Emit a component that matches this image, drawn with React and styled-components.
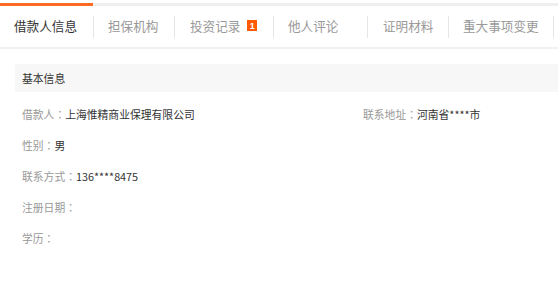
import { Fragment } from "react";
import styled, { createGlobalStyle } from "styled-components";

const GlobalStyle = createGlobalStyle`
    body {
        margin: 0;
        background: #fff;
        font-family: "Noto Sans CJK SC", "Noto Sans", sans-serif;
    }
`;

const Page = styled.div`
    width: 558px;
    padding-top: 3px;
`;

const TabBar = styled.div`
    display: flex;
    align-items: center;
    height: 41px;
    border-top: 3px solid #efefef;
    border-bottom: 2px solid #f2f2f2;
`;

const Tab = styled.div`
    display: flex;
    align-items: center;
    width: ${(p) => p.$w}px;
    height: 44px;
    margin-top: -3px;
    box-sizing: border-box;
    padding-left: ${(p) => p.$pad}px;
    padding-bottom: 2px;
    border-top: 3px solid ${(p) => (p.$active ? "#ff6a22" : "transparent")};
    font-size: 12.6px;
    color: ${(p) => (p.$active ? "#333" : "#999")};
    white-space: nowrap;
    cursor: pointer;
`;

const Divider = styled.span`
    flex: none;
    width: 1px;
    height: 22px;
    background: #e6e6e6;
    margin-top: 1px;
`;

const Badge = styled.span`
    display: inline-flex;
    align-items: center;
    justify-content: center;
    width: 10px;
    height: 11px;
    margin: 0 0 0 7px;
    background: #ff5a00;
    color: #fff;
    font-family: "Liberation Sans", sans-serif;
    font-size: 9px;
    font-weight: bold;
`;

const Section = styled.div`
    margin: 15px 0 0 15px;
`;

const SectionHeader = styled.div`
    height: 28px;
    line-height: 28px;
    padding-left: 7px;
    background: #f7f7f7;
    font-size: 10.8px;
    color: #333;
`;

const InfoGrid = styled.div`
    display: grid;
    grid-template-columns: 341px 1fr;
    margin-top: 7px;
    padding-left: 7px;
`;

const InfoRow = styled.div`
    height: 31px;
    line-height: 31px;
    font-size: 10.8px;
    color: #999;
    white-space: nowrap;
`;

const Colon = styled.span`
    font-family: "Noto Sans CJK TC", sans-serif;
`;

const Value = styled.span`
    color: #333;
`;

const tabs = [
    { t: "借款人信息", w: 93, pad: 14 },
    { t: "担保机构", w: 80, pad: 14 },
    { t: "投资记录", w: 98, pad: 15 },
    { t: "他人评论", w: 93, pad: 14 },
    { t: "证明材料", w: 80, pad: 15 },
    { t: "重大事项变更", w: 104, pad: 14 },
];

const rows = [
    ["借款人", "上海惟精商业保理有限公司"],
    ["联系地址", "河南省****市"],
    ["性别", "男"],
    null,
    ["联系方式", "136****8475"],
    null,
    ["注册日期", ""],
    null,
    ["学历", ""],
    null,
];

export default function App() {
    return (
        <Page>
            <GlobalStyle />
            <TabBar>
                {tabs.map((tab, i) => (
                    <Fragment key={tab.t}>
                        <Tab $active={i === 0} $w={tab.w} $pad={tab.pad}>
                            {tab.t}
                            {tab.t === "投资记录" && <Badge>1</Badge>}
                        </Tab>
                        <Divider />
                    </Fragment>
                ))}
            </TabBar>
            <Section>
                <SectionHeader>基本信息</SectionHeader>
                <InfoGrid>
                    {rows.map((r, i) => (
                        <InfoRow key={i}>
                            {r && (
                                <>
                                    {r[0]}
                                    <Colon>：</Colon>
                                    <Value>{r[1]}</Value>
                                </>
                            )}
                        </InfoRow>
                    ))}
                </InfoGrid>
            </Section>
        </Page>
    );
}
